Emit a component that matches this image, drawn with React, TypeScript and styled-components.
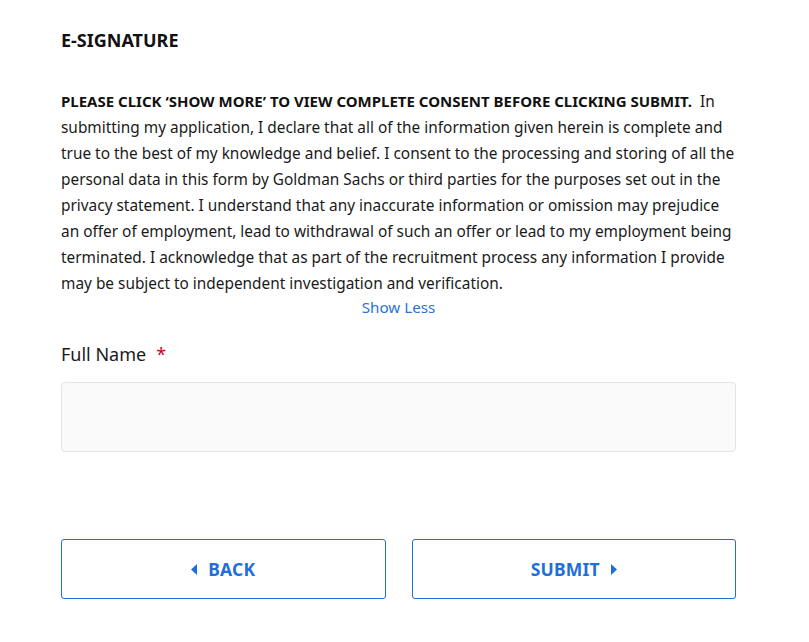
import styled, { createGlobalStyle } from 'styled-components';

const GlobalStyle = createGlobalStyle`
  html, body {
    margin: 0;
    padding: 0;
    background: #ffffff;
  }
  body {
    font-family: 'Noto Sans', 'Open Sans', sans-serif;
    color: #1a1a1a;
  }
`;

const Page = styled.div`
  width: 675px;
  padding: 28px 0 0 61px;
  display: flex;
  flex-direction: column;
`;

const Title = styled.h2`
  margin: 0;
  font-size: 18px;
  line-height: 24px;
  font-weight: 700;
  color: #111111;
`;

const Consent = styled.p`
  margin: 36px 0 0;
  font-size: 15.4px;
  line-height: 26px;
`;

const ConsentLead = styled.strong`
  font-size: 15px;
  font-weight: 700;
  color: #111111;
`;

const ToggleLink = styled.button`
  align-self: center;
  margin: 0;
  padding: 0;
  border: none;
  background: none;
  font-family: inherit;
  font-size: 15.2px;
  line-height: 20px;
  color: #2a73d9;
  cursor: pointer;
`;

const FieldLabel = styled.label`
  margin-top: 25px;
  font-size: 18px;
  line-height: 24px;
  color: #1a1a1a;
`;

const Required = styled.span`
  color: #d0021b;
  margin-left: 10px;
`;

const TextInput = styled.input`
  margin-top: 16px;
  height: 70px;
  box-sizing: border-box;
  border: 1px solid #e4e4e4;
  border-radius: 4px;
  background: #fafafa;
  padding: 0 16px;
  font-family: inherit;
  font-size: 16px;
  outline: none;
`;

const ButtonRow = styled.div`
  margin-top: 87px;
  display: grid;
  grid-template-columns: 1fr 1fr;
  gap: 26px;
`;

const NavButton = styled.button`
  height: 60px;
  border: 1px solid #1f6fd9;
  border-radius: 3px;
  background: #ffffff;
  color: #1f6fd9;
  font-family: inherit;
  font-size: 17.5px;
  font-weight: 700;
  letter-spacing: 0.2px;
  display: flex;
  align-items: center;
  justify-content: center;
  gap: 11px;
  cursor: pointer;
`;

const Caret = ({ dir }: { dir: 'left' | 'right' }) => (
  <svg width="6" height="11" viewBox="0 0 6 11" aria-hidden>
    {dir === 'left' ? (
      <path d="M6 0 L0 5.5 L6 11 Z" fill="currentColor" />
    ) : (
      <path d="M0 0 L6 5.5 L0 11 Z" fill="currentColor" />
    )}
  </svg>
);

export default function App() {
  return (
    <>
      <GlobalStyle />
      <Page>
        <Title>E-SIGNATURE</Title>
        <Consent>
          <ConsentLead>PLEASE CLICK ‘SHOW MORE’ TO VIEW COMPLETE CONSENT BEFORE CLICKING SUBMIT.</ConsentLead>
          {'\u00a0 '}In submitting my application, I declare that all of the information given herein is complete and
          true to the best of my knowledge and belief. I consent to the processing and storing of all the personal
          data in this form by Goldman Sachs or third parties for the purposes set out in the privacy statement. I
          understand that any inaccurate information or omission may prejudice an offer of employment, lead to
          withdrawal of such an offer or lead to my employment being terminated. I acknowledge that as part of the
          recruitment process any information I provide may be subject to independent investigation and verification.
        </Consent>
        <ToggleLink type="button">Show Less</ToggleLink>
        <FieldLabel htmlFor="fullName">
          Full Name<Required>*</Required>
        </FieldLabel>
        <TextInput id="fullName" type="text" />
        <ButtonRow>
          <NavButton type="button">
            <Caret dir="left" />
            BACK
          </NavButton>
          <NavButton type="button">
            SUBMIT
            <Caret dir="right" />
          </NavButton>
        </ButtonRow>
      </Page>
    </>
  );
}
